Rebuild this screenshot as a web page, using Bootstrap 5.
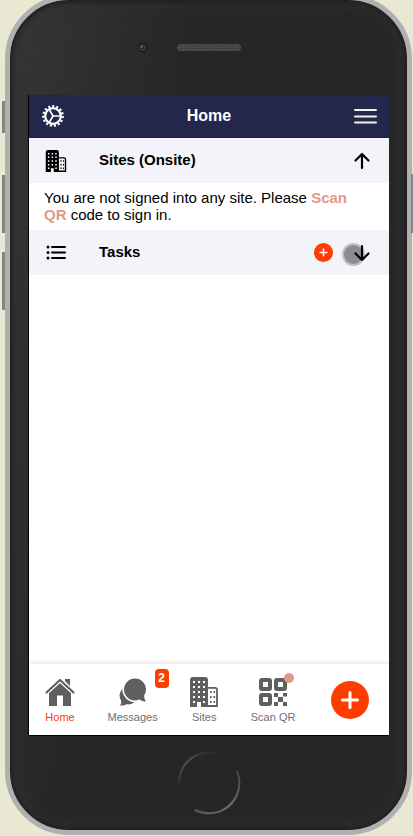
<!DOCTYPE html>
<html lang="en">
<head>
<meta charset="utf-8">
<meta name="viewport" content="width=device-width, initial-scale=1">
<title>Home</title>
<link href="https://cdn.jsdelivr.net/npm/bootstrap@5.3.0/dist/css/bootstrap.min.css" rel="stylesheet">
<style>
body{background:#e9e9d3;font-family:"Liberation Sans",Arial,sans-serif;font-size:15px;line-height:17px;color:#000;overflow:hidden}
svg{display:block;flex:none}
button{border:0;background:none;padding:0;color:inherit}
.stage{height:100vh;padding:0 1px 1px 5px}
.phone{margin-top:-5px;border:5px solid #b0b0b0;border-radius:64px;background:linear-gradient(100deg,#363636 0,#262626 35%,#262626 100%);box-shadow:inset 0 0 5px 2px #1c1c1c,inset 0 0 14px 4px #343434}
.side-key{position:absolute;background:#858585;width:3px}
.key-mute{left:-8px;top:101px;height:32px}
.key-up{left:-8px;top:175px;height:58px}
.key-down{left:-8px;top:252px;height:58px}
.key-power{right:-6px;top:174px;height:59px;width:2px}
.top-bezel{height:95px;padding:0 0 0 127px;gap:29px}
.bottom-bezel{height:94px}
.screen{margin:0 18px;background:#fff;border-left:1px solid #000;border-bottom:1px solid #000}
.app-head{height:43px;background:#23274c;border-bottom:1px solid #1c1f40;padding:0 12px 0 13px;color:#fff}
.app-title{font-size:16px;font-weight:700;line-height:20px;margin:0}
.bar{height:45px;background:#f3f4f9;padding:0 16px}
.bar h2{font-size:15px;font-weight:700;line-height:17px;margin:0 0 2px 32px}
.note{height:47px;padding:6px 24px 7px 15px;margin:0}
.note a{color:#e0998a;font-weight:700;text-decoration:none}
.add-small{margin-right:18px}
.touch{left:-9px;top:1px;width:23px;height:23px;border-radius:50%;background:#8f8991;border:2px solid #c0c2bb}
.tabs{height:71px;padding:1px 16px 0;box-shadow:0 -1px 4px rgba(0,0,0,.12);background:#fff}
.tabs .tab{color:#6a7075;font-size:11px;line-height:13px;text-decoration:none;gap:4px}
.tabs .tab + .tab{margin-left:5px}
.tabs .tab.active{color:#f53c0a}
.tab svg{color:#5f5f5f}
.count{right:-11px;top:-8px;width:14px;height:19px;border-radius:4px;background:#ff3d00;color:#fff;font-size:12px;font-weight:700;line-height:19px}
.dot{right:1px;top:-4px;width:10px;height:10px;border-radius:50%;background:#e0988a}
</style>
</head>
<body>
<svg width="0" height="0" class="position-absolute" aria-hidden="true">
 <symbol id="building" viewBox="0 0 28 30">
  <path fill="currentColor" d="M0 30V3Q0 0 3 0H15Q18 0 18 3V30H11V25H7V30Z"/>
  <path fill="none" stroke="currentColor" stroke-width="1.8" d="M18 10.8H25Q27 10.8 27 13V29H18"/>
  <g fill="#fff"><path d="M3 4h2v2H3zM8 4h2v2H8zM13 4h2v2h-2zM3 9h2v2H3zM8 9h2v2H8zM13 9h2v2h-2zM3 14h2v2H3zM8 14h2v2H8zM13 14h2v2h-2zM3 19h2v2H3zM8 19h2v2H8zM13 19h2v2h-2zM3 24h2v2H3zM13 24h2v2h-2z"/></g>
  <path fill="currentColor" d="M20 14h1.6v2H20zM23.5 14h1.6v2h-1.6zM20 19h1.6v2H20zM23.5 19h1.6v2h-1.6zM20 24h1.6v2H20zM23.5 24h1.6v2h-1.6z"/>
 </symbol>
</svg>
<div class="stage d-flex flex-column">
 <div class="phone position-relative flex-grow-1 d-flex flex-column">
  <i class="side-key key-mute"></i><i class="side-key key-up"></i><i class="side-key key-down"></i><i class="side-key key-power"></i>
  <div class="top-bezel d-flex align-items-center">
   <svg width="11" height="11" viewBox="0 0 11 11"><circle cx="5.500" cy="5.500" r="5" fill="#202020"/><circle cx="5.500" cy="5.500" r="3" fill="#424242"/><circle cx="5.500" cy="5.500" r="1.700" fill="#191919"/><circle cx="5" cy="5" r="1" fill="#777"/></svg>
   <svg width="64" height="7" viewBox="0 0 64 7"><defs><pattern id="mesh" width="3" height="3" patternUnits="userSpaceOnUse"><rect width="3" height="3" fill="#414141"/><path d="M0 0h1v1H0zM2 2h1v1H2z" fill="#5b5b5b"/></pattern></defs><rect width="64" height="7" rx="3" fill="url(#mesh)"/></svg>
  </div>
  <div class="screen flex-grow-1 d-flex flex-column">
   <header class="app-head d-flex align-items-center justify-content-between">
    <button type="button" aria-label="Settings">
     <svg width="22" height="22" viewBox="-11 -11 22 22" fill="none" stroke="#fff"><circle r="9.700" stroke-width="2.400" stroke-dasharray="2.030 2.030"/><circle r="7.800" stroke-width="2.200"/><path d="M0 0H7.500M0 0L-3.800 -6.600M0 0L-3.800 6.600" stroke-width="1.700"/></svg>
    </button>
    <h1 class="app-title">Home</h1>
    <button type="button" aria-label="Menu">
     <svg width="23" height="16" viewBox="0 0 23 16" stroke="#f4f1e8" stroke-width="2" stroke-linecap="round"><path d="M1 2H22M1 8.500H22M1 14.500H22"/></svg>
    </button>
   </header>
   <main class="flex-grow-1">
    <section>
     <div class="bar d-flex align-items-center">
      <svg width="22" height="22"><use href="#building"/></svg>
      <h2>Sites (Onsite)</h2>
      <button type="button" class="ms-auto" aria-label="Collapse sites">
       <svg width="22" height="22" viewBox="0 0 22 22" fill="none" stroke="#000" stroke-width="2.200" stroke-linecap="round" stroke-linejoin="round"><path d="M11 18V4M4.500 10.500L11 4L17.500 10.500"/></svg>
      </button>
     </div>
     <p class="note">You are not signed into any site. Please <a href="#scan">Scan QR</a> code to sign in.</p>
    </section>
    <section class="bar d-flex align-items-center">
     <svg width="22" height="22" viewBox="0 0 22 22" stroke="#000" stroke-width="2" stroke-linecap="round"><path d="M7 5H20M7 10.500H20M7 16H20"/><path stroke-width="3" d="M3 5h.01M3 10.500h.01M3 16h.01"/></svg>
     <h2>Tasks</h2>
     <button type="button" class="add-small ms-auto" aria-label="Add task">
      <svg width="19" height="19" viewBox="0 0 19 19"><circle cx="9.500" cy="9.500" r="9.500" fill="#ff3d00"/><path d="M9.500 6V13M6 9.500H13" stroke="#fff" stroke-width="1.500" stroke-linecap="round"/></svg>
     </button>
     <button type="button" class="position-relative" aria-label="Expand tasks">
      <span class="touch position-absolute"></span>
      <svg class="position-relative" width="22" height="22" viewBox="0 0 22 22" fill="none" stroke="#000" stroke-width="2.200" stroke-linecap="round" stroke-linejoin="round"><path d="M11 4V18M4.500 11.500L11 18L17.500 11.500"/></svg>
     </button>
    </section>
   </main>
   <nav class="tabs d-flex align-items-center justify-content-between" aria-label="Main">
    <a href="#home" class="tab active d-flex flex-column align-items-center">
     <svg width="30" height="30" viewBox="0 0 30 30"><path fill="currentColor" d="M20 3.500V2h5v7l-5-5zM4 16L15 6l11 10v13h-8V18.500h-6V29H4z"/><path d="M1.500 15.500L15 3l13.500 12.500" fill="none" stroke="#fff" stroke-width="4"/><path d="M1.500 15.500L15 3l13.500 12.500" fill="none" stroke="currentColor" stroke-width="2.200" stroke-linecap="round" stroke-linejoin="round"/></svg>
     <span>Home</span>
    </a>
    <a href="#messages" class="tab position-relative d-flex flex-column align-items-center">
     <svg width="30" height="30" viewBox="0 0 30 30"><ellipse cx="10.500" cy="18.500" rx="9" ry="9" fill="currentColor"/><path fill="currentColor" d="M3 23Q4 26 2 28.500Q6 29 9 27L6 22Z"/><circle cx="17" cy="12.500" r="12.600" fill="#fff"/><path fill="currentColor" d="M17 1.500A11 11 0 0 0 6 12.500A11 11 0 0 0 17 23.500Q19.500 23.500 21.500 22.500Q24.500 25 28 24.500Q26 22 26 18.500Q28 16 28 12.500A11 11 0 0 0 17 1.500Z"/></svg>
     <span>Messages</span><span class="count position-absolute text-center">2</span>
    </a>
    <a href="#sites" class="tab d-flex flex-column align-items-center">
     <svg width="28" height="30"><use href="#building"/></svg>
     <span>Sites</span>
    </a>
    <a href="#scan" class="tab position-relative d-flex flex-column align-items-center" id="scan">
     <svg width="30" height="30" viewBox="0 0 30 30"><g fill="none" stroke="currentColor" stroke-width="4"><rect x="3" y="3" width="9" height="9" rx="1"/><rect x="18" y="3" width="9" height="9" rx="1"/><rect x="3" y="18" width="9" height="9" rx="1"/></g><path fill="currentColor" d="M16 16h4v4h-4zM25 16h4v3.500h-4zM20 20h5v5h-5zM16 25h4v4h-4zM25 25h4v4h-4z"/></svg>
     <span>Scan QR</span><span class="dot position-absolute"></span>
    </a>
    <button type="button" class="add-large ms-2 me-1" aria-label="Add">
     <svg width="38" height="38" viewBox="0 0 38 38"><circle cx="19" cy="19" r="19" fill="#ff3d00"/><path d="M19 11.500V26.500M11.500 19H26.500" stroke="#fff" stroke-width="3" stroke-linecap="round"/></svg>
    </button>
   </nav>
  </div>
  <div class="bottom-bezel d-flex align-items-center justify-content-center">
   <svg width="64" height="64" viewBox="-32 -32 64 64" fill="none"><defs><linearGradient id="rimA" x1="0" y1="1" x2="1" y2="0"><stop stop-color="#555" stop-opacity=".3"/><stop offset=".5" stop-color="#505050"/><stop offset="1" stop-color="#505050" stop-opacity=".1"/></linearGradient><linearGradient id="rimB" x1="0" y1="1" x2="1" y2="0"><stop stop-color="#555"/><stop offset=".5" stop-color="#747474"/><stop offset="1" stop-color="#444"/></linearGradient></defs><path d="M-30 0A30 30 0 0 1 5 -30" stroke="url(#rimA)" stroke-width="2"/><path d="M28 -12A30.500 30.500 0 0 1 -14 27" stroke="url(#rimB)" stroke-width="2"/></svg>
  </div>
 </div>
</div>
<script src="https://cdn.jsdelivr.net/npm/bootstrap@5.3.0/dist/js/bootstrap.bundle.min.js"></script>
</body>
</html>
